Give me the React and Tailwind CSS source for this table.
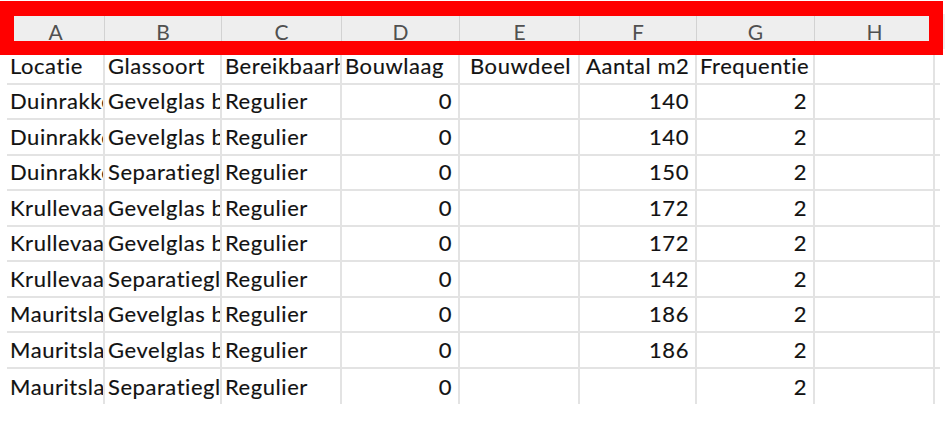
import React from "react";

const letters = ["A", "B", "C", "D", "E", "F", "G", "H"];
const wClass = [
  "w-[98px]",
  "w-[117px]",
  "w-[120px]",
  "w-[118px]",
  "w-[120px]",
  "w-[117px]",
  "w-[118px]",
  "w-[120px]",
];

const header = ["Locatie", "Glassoort", "Bereikbaarheid", "Bouwlaag", "Bouwdeel", "Aantal m2", "Frequentie", ""];
const rows = [
  ["Duinrakken", "Gevelglas buitenzijde", "Regulier", "0", "", "140", "2", ""],
  ["Duinrakken", "Gevelglas buitenzijde", "Regulier", "0", "", "140", "2", ""],
  ["Duinrakken", "Separatieglas", "Regulier", "0", "", "150", "2", ""],
  ["Krullevaart", "Gevelglas buitenzijde", "Regulier", "0", "", "172", "2", ""],
  ["Krullevaart", "Gevelglas buitenzijde", "Regulier", "0", "", "172", "2", ""],
  ["Krullevaart", "Separatieglas", "Regulier", "0", "", "142", "2", ""],
  ["Mauritslaan", "Gevelglas buitenzijde", "Regulier", "0", "", "186", "2", ""],
  ["Mauritslaan", "Gevelglas buitenzijde", "Regulier", "0", "", "186", "2", ""],
  ["Mauritslaan", "Separatieglas", "Regulier", "0", "", "", "2", ""],
];

const numericCols = [3, 5, 6];

function Row({ cells, last, isHeader }) {
  return (
    <div className="flex h-[35.5px]">
      {cells.map((c, i) => {
        const right = !isHeader && numericCols.includes(i);
        return (
          <div
            key={i}
            className={
              wClass[i] +
              " shrink-0 flex items-end pb-[6px] overflow-hidden whitespace-nowrap border-r-2 border-[#e3e3e3] " +
              (last ? "" : "border-b-2 ") +
              (right ? "justify-end pr-[6px] " : "pl-[3px] ") +
              (isHeader && i === 4 ? "pl-[10px] " : "") +
              (i === 5 && isHeader ? "pl-[6px] overflow-visible " : "")
            }
          >
            <span className="leading-none">{c}</span>
          </div>
        );
      })}
      <div className={"w-[5px] shrink-0 " + (last ? "" : "border-b-2 border-[#e3e3e3]")} />
    </div>
  );
}

export default function App() {
  return (
    <div className="relative w-[945px] h-[424px] bg-white overflow-hidden font-['Lato',sans-serif] text-[#121212] text-[22px] tracking-[0.55px] [-webkit-text-stroke:0.15px_#121212]">
      <div className="pl-[7px] pt-[14px]">
        <div className="flex h-[35px] bg-[#eeeeee]">
          {letters.map((l, i) => (
            <div
              key={l}
              className={wClass[i] + " shrink-0 flex items-center justify-center border-r border-[#d2d2d2] text-[#505050] text-[21px] tracking-normal [-webkit-text-stroke:0px]"}
            >
              {l}
            </div>
          ))}
          <div className="w-[5px] shrink-0" />
        </div>
        <Row cells={header} isHeader />
        {rows.map((r, i) => (
          <Row key={i} cells={r} last={i === rows.length - 1} />
        ))}
      </div>
      <div className="absolute left-0 top-[1px] w-[943px] h-[54px] border-t-[15px] border-b-[14px] border-l-[14px] border-r-[14px] border-[#ff0000]" />
    </div>
  );
}
